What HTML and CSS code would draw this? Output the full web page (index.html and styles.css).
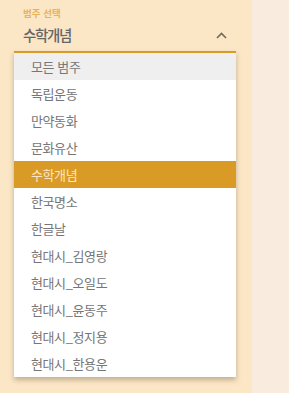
FILE: index.html
```html
<!DOCTYPE html>
<html lang="ko">
<head>
<meta charset="utf-8">
<link rel="stylesheet" href="styles.css">
</head>
<body>
<div class="page">
  <div class="panel">
    <div class="field">
      <div class="label">범주 선택</div>
      <div class="control">
        <span class="value">수학개념</span>
        <svg class="chevron" width="11" height="7" viewBox="0 0 11 7"><path d="M1 6 L5.5 1.5 L10 6" fill="none" stroke="#6f6a62" stroke-width="1.6"/></svg>
      </div>
    </div>
    <ul class="menu">
      <li class="item hover">모든 범주</li>
      <li class="item">독립운동</li>
      <li class="item">만약동화</li>
      <li class="item">문화유산</li>
      <li class="item selected">수학개념</li>
      <li class="item">한국명소</li>
      <li class="item">한글날</li>
      <li class="item">현대시_김영랑</li>
      <li class="item">현대시_오일도</li>
      <li class="item">현대시_윤동주</li>
      <li class="item">현대시_정지용</li>
      <li class="item">현대시_한용운</li>
    </ul>
  </div>
  <div class="side"></div>
</div>
</body>
</html>
```
FILE: styles.css
```css
html, body {
  margin: 0;
  padding: 0;
  height: 100%;
}
body {
  font-family: "Noto Sans CJK KR", "Noto Sans", sans-serif;
}
.page {
  display: flex;
  height: 393px;
}
.panel {
  width: 252px;
  background: #fbe6c6;
}
.side {
  flex: 1;
  background: #faebdf;
}
.field {
  padding: 7px 0 0 14px;
  width: 222px;
}
.label {
  font-size: 9.5px;
  line-height: 12px;
  font-weight: 700;
  color: #e8b35a;
  padding-left: 9px;
}
.control {
  display: flex;
  align-items: center;
  justify-content: space-between;
  height: 32px;
  padding: 0 9px 0 9px;
}
.value {
  font-size: 14.5px;
  font-weight: 500;
  letter-spacing: -1.3px;
  color: #666;
  line-height: 20px;
}
.chevron {
  display: block;
}
.menu {
  list-style: none;
  margin: 0 0 0 14px;
  padding: 0;
  width: 222px;
  border-top: 2px solid #d99b26;
  background: #fff;
  box-shadow: 0 3px 5px rgba(90, 70, 40, 0.35);
}
.item {
  height: 27px;
  line-height: 27px;
  padding-left: 17px;
  font-size: 13px;
  letter-spacing: -0.4px;
  color: #767676;
}
.item.hover {
  background: #efefef;
}
.item.selected {
  background: #d99b26;
  color: #fbe6c6;
}
```
